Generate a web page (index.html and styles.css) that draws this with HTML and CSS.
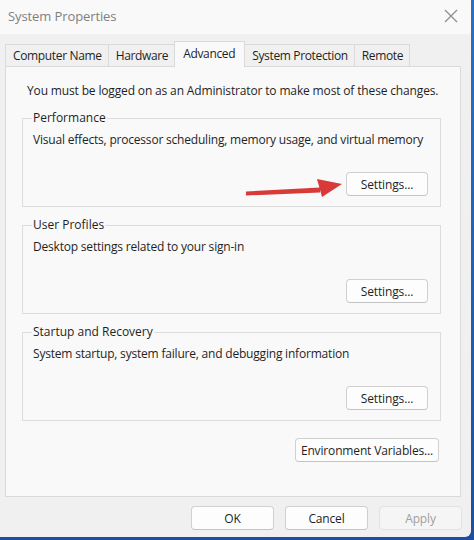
FILE: index.html
```html
<!DOCTYPE html>
<html>
<head>
<meta charset="utf-8">
<link rel="stylesheet" href="styles.css">
</head>
<body>
<div class="window">
  <div class="titlebar">
    <span class="title">System Properties</span>
    <svg class="close" width="14" height="14" viewBox="0 0 14 14"><path d="M1 1L13 13M13 1L1 13" stroke="#8c8c8c" stroke-width="1.2" fill="none"/></svg>
  </div>
  <div class="content">
    <div class="tabs">
      <div class="tab">Computer Name</div>
      <div class="tab">Hardware</div>
      <div class="tab active">Advanced</div>
      <div class="tab">System Protection</div>
      <div class="tab">Remote</div>
    </div>
    <div class="panel">
      <p class="notice">You must be logged on as an Administrator to make most of these changes.</p>
      <fieldset class="group">
        <legend>Performance</legend>
        <p class="desc">Visual effects, processor scheduling, memory usage, and virtual memory</p>
        <div class="row">
          <svg class="arrow" width="100" height="24" viewBox="0 0 100 24"><path d="M2 19.5L76 15.5L76 20.5L2 23.5Z" fill="#d83a3a"/><path d="M73 7L98 12L78 25Z" fill="#d83a3a"/></svg>
          <button class="btn">Settings...</button>
        </div>
      </fieldset>
      <fieldset class="group">
        <legend>User Profiles</legend>
        <p class="desc">Desktop settings related to your sign-in</p>
        <div class="row"><button class="btn">Settings...</button></div>
      </fieldset>
      <fieldset class="group">
        <legend>Startup and Recovery</legend>
        <p class="desc">System startup, system failure, and debugging information</p>
        <div class="row"><button class="btn">Settings...</button></div>
      </fieldset>
      <div class="env-row"><button class="btn env">Environment Variables...</button></div>
    </div>
    <div class="footer">
      <button class="btn foot">OK</button>
      <button class="btn foot">Cancel</button>
      <button class="btn foot disabled">Apply</button>
    </div>
  </div>
</div>
</body>
</html>
```
FILE: styles.css
```css
html, body {
  margin: 0;
  padding: 0;
}
body {
  width: 474px;
  height: 540px;
  background: linear-gradient(180deg, #2a6fc9 0%, #1d4f9e 100%);
  font-family: "Open Sans", "Noto Sans", sans-serif;
  font-size: 12px;
  color: #1f1f1f;
  overflow: hidden;
}
.window {
  width: 471px;
  height: 537px;
  background: #f0f0f0;
  display: flex;
  flex-direction: column;
  border-radius: 0 0 6px 0;
}
.titlebar {
  height: 34px;
  background: #f9f9f9;
  display: flex;
  align-items: center;
  justify-content: space-between;
  padding: 0 13px 0 8px;
}
.title {
  color: #808080;
  font-size: 13px;
  letter-spacing: -0.1px;
  margin-top: -2px;
}
.close {
  margin-top: -2px;
}
.content {
  padding: 7px 10px 0 5px;
  display: flex;
  flex-direction: column;
}
.tabs {
  display: flex;
  align-items: flex-end;
  height: 25px;
  position: relative;
  z-index: 1;
}
.tab {
  height: 22px;
  line-height: 21px;
  padding: 0 6px 0 7px;
  border: 1px solid #dadada;
  border-bottom: none;
  border-right: none;
  background: #f0f0f0;
  box-sizing: border-box;
  letter-spacing: -0.35px;
}
.tab:nth-child(5) {
  border-right: 1px solid #dadada;
}
.tab.active {
  height: 26px;
  line-height: 23px;
  background: #f9f9f9;
  border-right: 1px solid #dadada;
  margin-bottom: -1px;
  padding: 0 9px 0 8px;
}
.tab.active + .tab {
  border-left: none;
}
.panel {
  height: 431px;
  box-sizing: border-box;
  border: 1px solid #dadada;
  background: #f9f9f9;
  padding: 16px 19px 0 16px;
  display: flex;
  flex-direction: column;
}
.notice {
  margin: 0 0 11px 5px;
  line-height: 16px;
  letter-spacing: -0.15px;
}
.group {
  margin: 0 0 10px 0;
  padding: 0 12px 10px 10px;
  border: 1px solid #dcdcdc;
  min-width: 0;
}
.group legend {
  padding: 0 1px;
  margin-left: -1px;
  line-height: 16px;
}
.desc {
  margin: 6px 0 24px 0;
  line-height: 16px;
  letter-spacing: -0.2px;
}
.row {
  display: flex;
  justify-content: flex-end;
  align-items: center;
  gap: 2px;
}
.arrow {
  overflow: visible;
}
.btn {
  font-family: inherit;
  font-size: 12px;
  color: #1f1f1f;
  height: 24px;
  width: 82px;
  background: #fdfdfd;
  border: 1px solid #d0d0d0;
  border-bottom-color: #c4c4c4;
  border-radius: 4px;
  padding: 0;
  letter-spacing: -0.15px;
}
.env-row {
  display: flex;
  justify-content: flex-end;
  margin-top: 7px;
  padding-right: 2px;
}
.btn.env {
  width: 144px;
}
.footer {
  display: flex;
  justify-content: flex-end;
  gap: 11px;
  padding-top: 9px;
  margin-right: -1px;
}
.btn.foot {
  width: 83px;
}
.btn.disabled {
  color: #a0a0a0;
  background: #f5f5f5;
  border-color: #e2e2e2;
}
```
